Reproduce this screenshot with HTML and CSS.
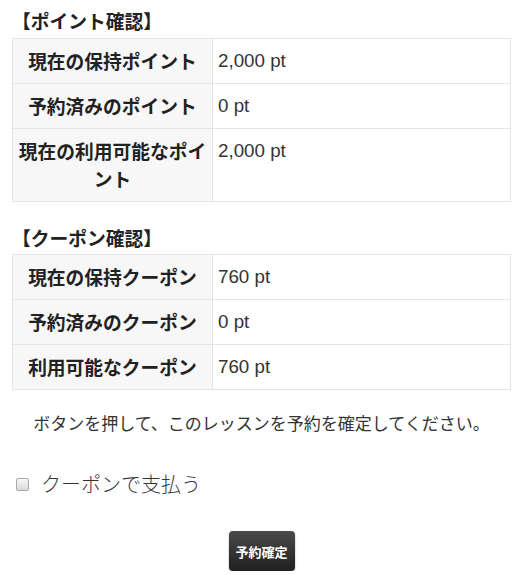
FILE: index.html
```html
<!DOCTYPE html>
<html lang="ja">
<head>
<meta charset="utf-8">
<title>予約確認</title>
<link rel="stylesheet" href="styles.css">
</head>
<body>
<div class="wrap">
  <h3 class="sec first">【ポイント確認】</h3>
  <table class="info">
    <tr><th>現在の保持ポイント</th><td>2,000 pt</td></tr>
    <tr><th>予約済みのポイント</th><td>0 pt</td></tr>
    <tr><th>現在の利用可能なポイント</th><td>2,000 pt</td></tr>
  </table>
  <h3 class="sec">【クーポン確認】</h3>
  <table class="info">
    <tr><th>現在の保持クーポン</th><td>760 pt</td></tr>
    <tr><th>予約済みのクーポン</th><td>0 pt</td></tr>
    <tr><th>利用可能なクーポン</th><td>760 pt</td></tr>
  </table>
  <p class="note">ボタンを押して、このレッスンを予約を確定してください。</p>
  <label class="check"><input type="checkbox" class="cb"><span class="check-text">クーポンで支払う</span></label>
  <div class="actions"><button class="btn" type="button">予約確定</button></div>
</div>
</body>
</html>
```

FILE: styles.css
```css
html, body {
  margin: 0;
  padding: 0;
  background: #fff;
}
body {
  font-family: "Liberation Sans", "Noto Sans CJK JP", sans-serif;
  color: #333;
}
.wrap {
  padding: 0 4px 0 12px;
}
.sec {
  font-family: "Noto Sans CJK JP", sans-serif;
  font-size: 18.75px;
  font-weight: bold;
  line-height: 28px;
  margin: 22px 0 2px;
  color: #222;
}
.sec.first {
  margin-top: 7px;
  margin-bottom: 3px;
}
.info {
  width: 100%;
  border-collapse: collapse;
  border: 1px solid #e4e4e4;
}
.info th,
.info td {
  border: 1px solid #e4e4e4;
  line-height: 28px;
  font-size: 18.75px;
  vertical-align: top;
  padding: 8px 5px;
}
.info th {
  width: 189px;
  background: #f7f7f7;
  font-family: "Noto Sans CJK JP", sans-serif;
  font-weight: bold;
  text-align: center;
  color: #222;
}
.info td {
  text-align: left;
  padding-left: 5px;
}
.note {
  font-family: "Noto Sans CJK JP", sans-serif;
  font-size: 17px;
  line-height: 24px;
  text-align: center;
  margin: 21px 0 0;
}
.check {
  display: flex;
  align-items: center;
  margin-top: 34px;
  height: 30px;
}
.cb {
  appearance: none;
  -webkit-appearance: none;
  width: 13px;
  height: 13px;
  margin: 0 0 0 4px;
  border: 1px solid #a9a9a9;
  border-radius: 2px;
  background: linear-gradient(#f6f6f6, #d9d9d9);
  box-sizing: border-box;
}
.check-text {
  font-family: "Noto Sans CJK JP", sans-serif;
  font-weight: 300;
  font-size: 20px;
  line-height: 30px;
  margin-left: 12px;
}
.actions {
  display: flex;
  justify-content: center;
  margin-top: 32px;
}
.btn {
  width: 66px;
  height: 40px;
  padding: 0;
  border: none;
  border-radius: 4px;
  background: linear-gradient(#4a4a4a, #202020);
  color: #fff;
  font-family: "Noto Sans CJK JP", sans-serif;
  font-size: 13px;
  font-weight: bold;
  box-shadow: 0 1px 2px rgba(0,0,0,0.35);
}
```
